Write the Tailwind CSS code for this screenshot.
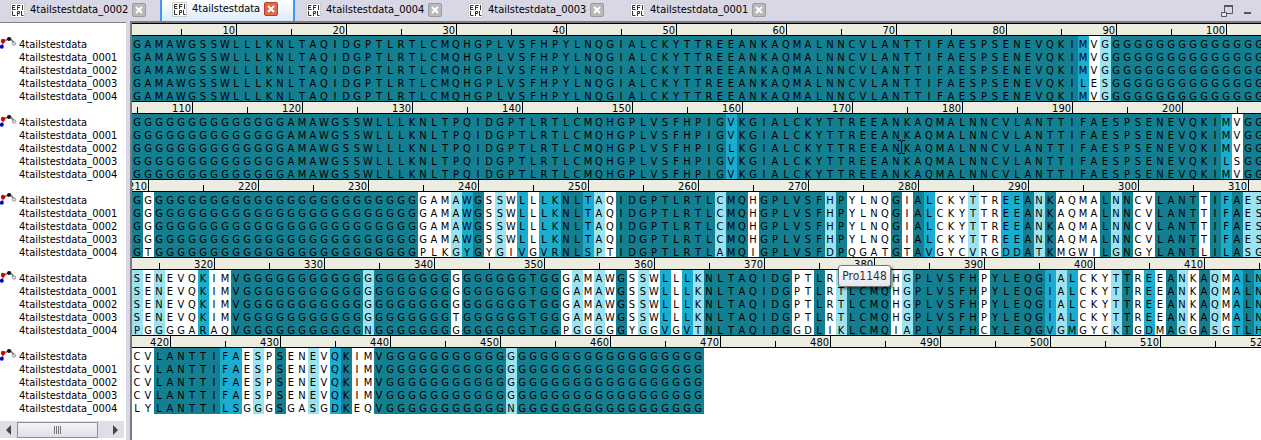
<!DOCTYPE html>
<html lang="en">
<head>
    <meta charset="UTF-8">
    <meta name="viewport" content="width=device-width, initial-scale=1.0">
    <title>Sequence Alignment</title>
    <script src="https://cdn.jsdelivr.net/npm/@tailwindcss/browser@4"></script>
</head>
<body class="h-screen flex flex-col overflow-hidden bg-white text-black font-['DejaVu_Sans_Condensed','DejaVu_Sans',sans-serif] text-[11px]">
    <!-- Tabs -->
    <header class="h-[21px] shrink-0 flex bg-[#d8d7e6]">
        <nav id="tabs" class="flex"></nav>
        <div class="ml-auto mr-[9px] flex gap-2">
            <button aria-label="Restore">
                <svg class="w-[15px] h-[15px]" viewBox="0 0 15 15" fill="none" stroke="#555563"><path d="M4.5 3v7.5h8V3" /><path d="M4 3h9" stroke-width="2" /><path d="M1.5 9.5h5v4h-5z" fill="#e8e7f0" /></svg>
            </button>
            <button aria-label="Minimize">
                <svg class="w-[9px] h-[15px]" viewBox="0 0 9 15"><path d="M1 9h7v2H1z" fill="#555563" /></svg>
            </button>
        </div>
    </header>

    <main class="flex-1 min-h-0 flex bg-[#d8d7e6]">
        <!-- Sequence names -->
        <aside class="w-[126px] shrink-0 mt-px border-t border-[#808080] bg-white flex flex-col">
            <div id="names"></div>
            <div class="mt-auto mb-0.5 mr-0.5 h-[17px] flex bg-[#dddfe4]">
                <button class="w-[17px] flex items-center justify-center" aria-label="Scroll left">
                    <svg class="w-[5px] h-[10px]" viewBox="0 0 5 10"><path d="M5 0v10L0 5z" fill="#444" /></svg>
                </button>
                <button class="w-[81px] h-4 mt-px border border-[#8b8f96] bg-linear-to-b from-[#f4f5f7] to-[#dcdfe5] flex items-center justify-center gap-px" aria-label="Scroll thumb">
                    <span class="w-px h-2 bg-[#777]"></span>
                    <span class="w-px h-2 bg-[#777]"></span>
                    <span class="w-px h-2 bg-[#777]"></span>
                    <span class="w-px h-2 bg-[#777]"></span>
                </button>
                <button class="flex-1 flex items-center justify-end pr-[6px]" aria-label="Scroll right">
                    <svg class="w-[5px] h-[10px]" viewBox="0 0 5 10"><path d="M0 0v10l5-5z" fill="#444" /></svg>
                </button>
            </div>
        </aside>

        <!-- Alignment -->
        <section class="relative flex-1 min-w-0 ml-1 border-t-2 border-l-2 border-[#7c7a80] bg-white overflow-hidden">
            <div id="alignment"></div>
            <div class="absolute left-[706px] top-[242px] w-[53px] h-[22px] rounded-[3px] border border-[#767676] bg-linear-to-b from-white to-[#e4e5f0] shadow-[2px_2px_3px_rgba(0,0,0,0.5)] text-center text-[12px] leading-[20px] text-[#333]">Pro1148</div>
            <svg class="absolute left-[766px] top-[117px] w-[7px] h-[14px]" viewBox="0 0 7 14" fill="none" stroke="#000"><path d="M0 .5h3M4 .5h3M3.5 1v12M0 13.5h3M4 13.5h3" /></svg>
        </section>
    </main>

    <script>
        const names = ['4tailstestdata', '4tailstestdata_0001', '4tailstestdata_0002', '4tailstestdata_0003', '4tailstestdata_0004'];
        const tabs = [names[2], names[0], names[4], names[3], names[1]];
        const COLUMNS = 104;

        const g = (n) => 'G'.repeat(n);
        const full = (n) => '3'.repeat(n);

        const head = 'GAMAWGSSWLLLKNLTAQIDGPTLRTLCMQHGPLVSFHPYLNQGIALCKYTTREEANKAQMALNNCVLANTTIFAESPSENEVQKI';
        const second = g(13) + 'GAMAWGSSWLLLKNLTPQIDGPTLRTLCMQHGPLVSFHPIG';
        const secondTail = 'KGIALCKYTTREEANKAQMALNNCVLANTTIFAESPSENEVQKI';
        const third = 'GG' + g(24) + head.slice(0, 78);
        const fourthTail = g(6) + 'TGGGAMAWGSSWLLLKNLTAQIDGPTLRTLCMQHGPLVSFHPYLEQGIALCKYTTREEANKAQMALNN';
        const fourth = 'SENEVQKIMV' + g(20) + fourthTail;
        const fifth = 'CVLANTTIFAESPSENEVQKIMV' + g(29);

        // shades: 0 = none, 1 = weak, 2 = similar, 3 = identical
        const blocks = [
            {
                rows: [head + 'MV' + g(16), head + 'MV' + g(16), head + 'MV' + g(16), head + 'LES' + g(15), head + 'MV' + g(16)],
                shades: full(86) + '201' + full(15)
            },
            {
                rows: [
                    second + 'V' + secondTail + 'MVGGG',
                    second + 'V' + secondTail + 'MVGGG',
                    second + 'L' + secondTail + 'MVGGG',
                    second + 'V' + secondTail + 'LSGGG',
                    second + 'V' + secondTail + 'MVGGG'
                ],
                shades: full(54) + '2' + full(44) + '20' + full(3)
            },
            {
                rows: [third, third, third, third,
                    'GT' + g(24) + 'PLKGYGYGIVGVRNLSPTIDGPTLRTLAMQIGPLVSFDPQGATGTAVGYCVRGDDATKMGWILGNGYLANTLILASGG'],
                shades: '30' + full(24) + '000123010202233210' + full(9) + '1330' + full(6) + '13000030320001002231300003130033330323111'
            },
            {
                rows: [fourth, fourth, fourth, 'SENEVQKIMV' + g(19) + 'T' + fourthTail,
                    'PGGGGARAQV' + g(11) + 'N' + g(14) + 'TGGPGGGGGYGGVGVTNLTAQIDGGDLIKLCMQIAPLVSFHCYLEQGVGMGYCKTGDMAGGASGTLHG'],
                shades: '101000200' + full(12) + '1' + full(7) + '0' + full(9) + '0101030102021' + full(8) + '00301333301' + full(6) + '0' + full(5) + '212000130203103102322'
            },
            {
                rows: [fifth, fifth, fifth, fifth, 'LYLANTTILSGGGSGASGDKEQV' + g(11) + 'N' + g(17)],
                shades: '0033333322010300102300' + full(12) + '1' + full(17)
            }
        ];

        const shadeClass = { 0: 'bg-white', 1: 'bg-[#9be3f1]', 2: 'bg-[#1aadd0]', 3: 'bg-[#137f90]' };

        const molecule = `
            <svg class="w-[17px] h-[13px] shrink-0" viewBox="0 0 17 13">
                <path d="M2 10L4 5L10 2L14 7" fill="none" stroke="#777" stroke-width="1.5" />
                <circle cx="3" cy="5" r="2.2" fill="#d80000" />
                <circle cx="1.8" cy="10.8" r="2" fill="#0000c8" />
                <circle cx="9" cy="3" r="2" fill="#111" />
                <circle cx="14" cy="7.5" r="1.7" fill="#ddd" stroke="#777" stroke-width=".7" />
            </svg>`;

        function drawTabs() {
            document.getElementById('tabs').innerHTML = tabs.map((name, i) => {
                const active = name === names[0];
                const box = active
                    ? 'w-[135px] pl-[10px] pb-[3px] border-x-[2px] border-[#3f97f6] bg-linear-to-b from-white to-[#dcebfc]'
                    : i === 0 ? 'w-[160px] pl-[10px] pb-px' : 'w-[162px] pl-[11px] pb-px';
                const close = active ? 'bg-[#e0694a] border-[#c33a2a]' : 'bg-[#b9b9b9] border-[#9c9c9c]';
                return `
                    <div class="h-[21px] flex items-center ${box}">
                        <button class="flex items-center">
                            <svg class="w-[15px] h-[15px] mr-[5px]" viewBox="0 0 15 15">
                                <rect x=".5" y=".5" width="14" height="14" fill="#fff" stroke="#ccc" />
                                <path d="M5.5 2.5h-3v4h3M2.5 4.5H5M7.5 7V2.5h3M7.5 4.5H10M12.5 2v5M2.5 8v4.500h3M7.500 13V8.500h2v2h-2M11.500 8v4.500h2" fill="none" stroke="#333" />
                            </svg>
                            <span>${name}</span>
                        </button>
                        <button class="ml-1 w-[14px] h-[14px] rounded-[2px] border ${close}" aria-label="Close ${name}">
                            <svg viewBox="0 0 12 12"><path d="M3 3l6 6M9 3l-6 6" stroke="#fff" stroke-width="2" /></svg>
                        </button>
                    </div>`;
            }).join('');
        }

        function drawNames() {
            document.getElementById('names').innerHTML = blocks.map(() => `
                <ul class="h-[78px] pt-[13px]">
                    ${names.map((name, i) => `
                        <li class="h-[13px] leading-[17px] flex">
                            ${i === 0 ? molecule : '<span class="w-[17px] shrink-0"></span>'}
                            <span class="pl-0.5 whitespace-nowrap">${name}</span>
                        </li>`).join('')}
                </ul>`).join('');
        }

        function drawRuler(start) {
            let html = '';
            const first = Math.ceil(start / 10) * 10;
            for (let n = first; n < start + COLUMNS + 10; n += 10) {
                const width = n === first ? (n - start) * 11 + 6 : 110;
                html += `
                    <div class="shrink-0 h-[11px] flex justify-end items-end" style="width: ${width}px">
                        <span class="shrink-0 w-px h-[6px] bg-black"></span>
                        <span class="shrink-0 w-[55px] h-[11px] leading-[14px] pr-px border-r border-black text-right">${n}</span>
                    </div>`;
            }
            return html;
        }

        function drawAlignment() {
            document.getElementById('alignment').innerHTML = blocks.map((block, b) => `
                <div class="h-[78px] overflow-hidden last:h-[79px]">
                    <div class="h-[13px] border-y border-black bg-[#ecece0] flex">${drawRuler(b * COLUMNS + 1)}</div>
                    <table class="border-collapse">
                        ${block.rows.map((row) => `
                            <tr class="h-[13px] last:h-[14px]">
                                ${[...row].map((letter, i) => `<td class="p-0 align-top ${shadeClass[block.shades[i]]}"><span class="block w-[11px] h-[13px] pr-px leading-[17px] text-center">${letter}</span></td>`).join('')}
                            </tr>`).join('')}
                    </table>
                </div>`).join('');
        }

        drawTabs();
        drawNames();
        drawAlignment();
    </script>
</body>
</html>
